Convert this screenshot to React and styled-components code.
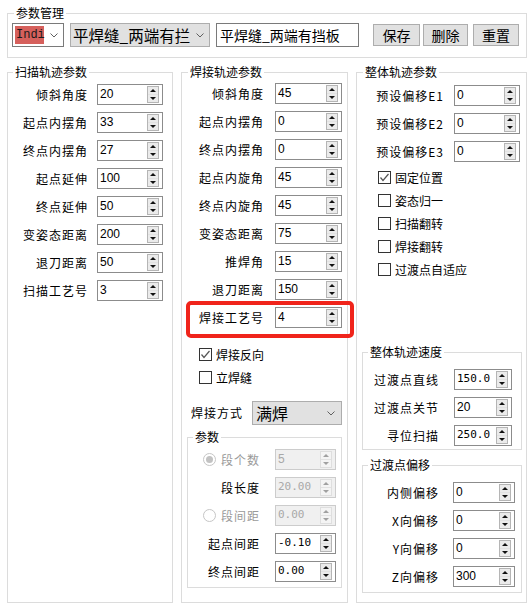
import React from "react";
import styled, { createGlobalStyle, css } from "styled-components";

const GlobalStyle = createGlobalStyle`
  html, body { margin: 0; padding: 0; background: #fff; }
  body {
    font-family: "Noto Sans CJK SC", "Noto Sans", sans-serif;
    color: #000;
  }
  * { box-sizing: border-box; }
`;

const Page = styled.div`
  width: 532px;
  height: 607px;
  padding: 13px 0 0 7px;
  display: flex;
  flex-direction: column;
  gap: 14px;
`;

const Group = styled.div`
  position: relative;
  flex-shrink: 0;
  border: 1px solid #dcdcdc;
  width: ${(p) => p.$w}px;
  height: ${(p) => p.$h}px;
  padding: ${(p) => p.$pad || "0"};
  margin: ${(p) => p.$m || "0"};
`;

const GroupTitle = styled.span`
  position: absolute;
  top: -8px;
  left: ${(p) => p.$left ?? 5}px;
  padding: 0 2px;
  background: #fff;
  font-size: 12px;
  line-height: 14px;
  white-space: nowrap;
`;

const TopRow = styled.div`
  display: flex;
  align-items: center;
  height: 24px;
`;

const Combo = styled.div`
  display: flex;
  align-items: center;
  justify-content: space-between;
  flex-shrink: 0;
  width: ${(p) => p.$w}px;
  height: 24px;
  margin-right: ${(p) => p.$mr || 0}px;
  padding: 0 ${(p) => p.$pr || 5}px 0 ${(p) => p.$pl || 2}px;
  border: 1px solid ${(p) => (p.$flat ? "#adadad" : "#7a7a7a")};
  background: ${(p) => (p.$flat ? "#e1e1e1" : "#fff")};
  font-size: ${(p) => p.$fs || 15}px;
  white-space: nowrap;
  overflow: hidden;
`;

const IndiTag = styled.span`
  width: 29px;
  height: 18px;
  background: #d6605c;
  font-family: "Liberation Mono", monospace;
  font-size: 12px;
  line-height: 18px;
  color: #1a1a1a;
  padding-left: 1px;
`;

const NameInput = styled.input`
  width: 143px;
  height: 24px;
  margin: 0 14px 0 0;
  padding: 0 3px;
  border: 1px solid #7a7a7a;
  background: #fff;
  font-family: "Noto Sans CJK SC", sans-serif;
  font-size: 14px;
  color: #000;
  outline: none;
`;

const Button = styled.button`
  width: ${(p) => p.$w}px;
  height: 22px;
  margin-right: ${(p) => p.$mr || 0}px;
  padding: 0;
  border: 1px solid #adadad;
  background: #e1e1e1;
  font-family: "Noto Sans CJK SC", sans-serif;
  font-size: 14px;
  line-height: 20px;
  color: #000;
`;

const Columns = styled.div`
  display: flex;
  gap: 8px;
`;

const FieldRow = styled.div`
  position: relative;
  display: grid;
  grid-template-columns: ${(p) => p.$lw}px ${(p) => p.$sw}px;
  column-gap: ${(p) => p.$gap}px;
  align-items: center;
  height: 21px;
  margin-bottom: 7px;
  ${(p) =>
    p.$highlight &&
    css`
      &::after {
        content: "";
        position: absolute;
        left: 4px;
        right: -7px;
        top: -6px;
        bottom: -10px;
        border: 4px solid #f0241b;
        border-radius: 5px;
      }
    `}
`;

const Label = styled.span`
  justify-self: end;
  display: flex;
  align-items: center;
  gap: 5px;
  margin-right: -1px;
  font-size: 12px;
  line-height: 14px;
  letter-spacing: 1px;
  white-space: nowrap;
  color: ${(p) => (p.$dim ? "#9a9a9a" : "#000")};
`;

const SpinBox = styled.div`
  display: flex;
  justify-content: space-between;
  height: 21px;
  padding: 1px 3px 1px 2px;
  border: 1px solid ${(p) => (p.$disabled ? "#cccccc" : "#8c8c8c")};
  background: ${(p) => (p.$disabled ? "#f0f0f0" : "#fff")};
`;

const SpinValue = styled.span`
  font-family: ${(p) =>
    p.$mono ? '"DejaVu Sans Mono", monospace' : '"Liberation Sans", Arial, sans-serif'};
  font-size: ${(p) => (p.$mono ? 11 : 12)}px;
  line-height: 16px;
  color: ${(p) => (p.$disabled ? "#a8a8a8" : "#000")};
`;

const SpinButtons = styled.div`
  display: flex;
  flex-direction: column;
  width: 12px;
  height: 17px;
  border: 1px solid ${(p) => (p.$disabled ? "#dedede" : "#b5b5b5")};
  background: ${(p) => (p.$disabled ? "#f4f4f4" : "#ebebeb")};
`;

const SpinHalf = styled.div`
  flex: 1;
  display: flex;
  align-items: center;
  justify-content: center;
  & + & {
    border-top: 1px solid ${(p) => (p.$disabled ? "#e2e2e2" : "#c4c4c4")};
  }
`;

const Arrow = styled.span`
  width: 0;
  height: 0;
  border-left: 3px solid transparent;
  border-right: 3px solid transparent;
  ${(p) =>
    p.$up
      ? css`border-bottom: 3px solid ${p.$disabled ? "#a0a0a0" : "#111"};`
      : css`border-top: 3px solid ${p.$disabled ? "#a0a0a0" : "#111"};`}
`;

const CheckList = styled.div`
  display: flex;
  flex-direction: column;
  gap: 6px;
  margin: ${(p) => p.$m || "0"};
`;

const CheckRow = styled.div`
  display: flex;
  align-items: center;
  gap: 4px;
  height: 17px;
  padding-left: ${(p) => p.$pl}px;
  font-size: 12px;
  line-height: 14px;
`;

const Box = styled.span`
  display: flex;
  align-items: center;
  justify-content: center;
  width: 13px;
  height: 13px;
  border: 1px solid #333;
  background: #fff;
`;

const Radio = styled.span`
  display: flex;
  align-items: center;
  justify-content: center;
  width: 13px;
  height: 13px;
  border: 1px solid #c6c6c6;
  border-radius: 50%;
  background: #fff;
  &::after {
    content: "";
    display: ${(p) => (p.$on ? "block" : "none")};
    width: 7px;
    height: 7px;
    border-radius: 50%;
    background: #c2c2c2;
  }
`;

const ModeRow = styled.div`
  display: flex;
  align-items: center;
  height: 24px;
  margin-top: 15px;
  padding-left: 9px;
`;

const ModeLabel = styled.span`
  width: 61px;
  font-size: 12px;
  line-height: 14px;
  letter-spacing: 1px;
`;

const Chevron = () => (
  <svg width="8" height="5" viewBox="0 0 8 5">
    <polyline points="0.5,0.5 4,4 7.5,0.5" fill="none" stroke="#606060" strokeWidth="1" />
  </svg>
);

const Tick = () => (
  <svg width="11" height="11" viewBox="0 0 11 11">
    <polyline points="1.5,5.5 4,8.5 9.5,2" fill="none" stroke="#555" strokeWidth="1.2" />
  </svg>
);

const Spinner = ({ value, mono, disabled }) => (
  <SpinBox $disabled={disabled}>
    <SpinValue $mono={mono} $disabled={disabled}>
      {value}
    </SpinValue>
    <SpinButtons $disabled={disabled}>
      <SpinHalf $disabled={disabled}>
        <Arrow $up $disabled={disabled} />
      </SpinHalf>
      <SpinHalf $disabled={disabled}>
        <Arrow $disabled={disabled} />
      </SpinHalf>
    </SpinButtons>
  </SpinBox>
);

const Field = ({ label, value, lw, sw, gap, mono, disabled, dim, radio, highlight }) => (
  <FieldRow $lw={lw} $sw={sw} $gap={gap} $highlight={highlight}>
    <Label $dim={dim}>
      {radio && <Radio $on={radio === "on"} />}
      {label}
    </Label>
    <Spinner value={value} mono={mono} disabled={disabled} />
  </FieldRow>
);

const Check = ({ label, checked, pl }) => (
  <CheckRow $pl={pl}>
    <Box>{checked && <Tick />}</Box>
    {label}
  </CheckRow>
);

const scanRows = [
  ["倾斜角度", "20"],
  ["起点内摆角", "33"],
  ["终点内摆角", "27"],
  ["起点延伸", "100"],
  ["终点延伸", "50"],
  ["变姿态距离", "200"],
  ["退刀距离", "50"],
  ["扫描工艺号", "3"],
];

const weldRows = [
  ["倾斜角度", "45"],
  ["起点内摆角", "0"],
  ["终点内摆角", "0"],
  ["起点内旋角", "45"],
  ["终点内旋角", "45"],
  ["变姿态距离", "75"],
  ["推焊角", "15"],
  ["退刀距离", "150"],
  ["焊接工艺号", "4"],
];

const segRows = [
  { label: "段个数", value: "5", disabled: true, dim: true, radio: "on" },
  { label: "段长度", value: "20.00", disabled: true, mono: true },
  { label: "段间距", value: "0.00", disabled: true, dim: true, radio: "off", mono: true },
  { label: "起点间距", value: "-0.10", mono: true },
  { label: "终点间距", value: "0.00", mono: true },
];

const offsetPresets = [
  ["预设偏移E1", "0"],
  ["预设偏移E2", "0"],
  ["预设偏移E3", "0"],
];

const globalChecks = [
  ["固定位置", true],
  ["姿态归一", false],
  ["扫描翻转", false],
  ["焊接翻转", false],
  ["过渡点自适应", false],
];

const speedRows = [
  ["过渡点直线", "150.0", true],
  ["过渡点关节", "20", false],
  ["寻位扫描", "250.0", true],
];

const shiftRows = [
  ["内侧偏移", "0"],
  ["X向偏移", "0"],
  ["Y向偏移", "0"],
  ["Z向偏移", "300"],
];

export default function App() {
  return (
    <>
      <GlobalStyle />
      <Page>
        <Group $w={520} $h={45} $pad="9px 4px 0 4px">
          <GroupTitle $left={6}>参数管理</GroupTitle>
          <TopRow>
            <Combo $w={52} $mr={6} $pl={2} $pr={5}>
              <IndiTag>Indi</IndiTag>
              <Chevron />
            </Combo>
            <Combo $w={140} $mr={6} $flat $fs={15.5} $pl={2} $pr={5}>
              <span>平焊缝_两端有拦</span>
              <Chevron />
            </Combo>
            <NameInput defaultValue="平焊缝_两端有挡板" />
            <Button $w={47} $mr={3}>保存</Button>
            <Button $w={45} $mr={5}>删除</Button>
            <Button $w={46}>重置</Button>
          </TopRow>
        </Group>

        <Columns>
          <Group $w={166} $h={531} $pad="11px 0 0 0">
            <GroupTitle>扫描轨迹参数</GroupTitle>
            {scanRows.map(([l, v]) => (
              <Field key={l} label={l} value={v} lw={79} sw={66} gap={10} />
            ))}
          </Group>

          <Group $w={167} $h={531} $pad="10px 0 0 0">
            <GroupTitle $left={6}>焊接轨迹参数</GroupTitle>
            {weldRows.map(([l, v], i) => (
              <Field
                key={l}
                label={l}
                value={v}
                lw={81}
                sw={67}
                gap={12}
                highlight={i === weldRows.length - 1}
              />
            ))}
            <CheckList $m="18px 0 0 0">
              <Check label="焊接反向" checked pl={17} />
              <Check label="立焊缝" pl={17} />
            </CheckList>
            <ModeRow>
              <ModeLabel>焊接方式</ModeLabel>
              <Combo $w={90} $flat $fs={16} $pl={3} $pr={6}>
                <span>满焊</span>
                <Chevron />
              </Combo>
            </ModeRow>
            <Group $w={155} $h={151} $m="12px 0 0 5px" $pad="11px 0 0 0">
              <GroupTitle>参数</GroupTitle>
              {segRows.map((r) => (
                <Field key={r.label} {...r} lw={71} sw={61} gap={16} />
              ))}
            </Group>
          </Group>

          <Group $w={171} $h={531} $pad="12px 0 0 0">
            <GroupTitle $left={6}>整体轨迹参数</GroupTitle>
            {offsetPresets.map(([l, v]) => (
              <Field key={l} label={l} value={v} lw={86} sw={66} gap={11} />
            ))}
            <CheckList $m="6px 0 0 0">
              {globalChecks.map(([l, c]) => (
                <Check key={l} label={l} checked={c} pl={21} />
              ))}
            </CheckList>
            <Group $w={160} $h={98} $m="74px 0 0 5px" $pad="16px 0 0 0">
              <GroupTitle>整体轨迹速度</GroupTitle>
              {speedRows.map(([l, v, m]) => (
                <Field key={l} label={l} value={v} mono={m} lw={75} sw={58} gap={16} />
              ))}
            </Group>
            <Group $w={160} $h={128} $m="15px 0 0 5px" $pad="16px 0 0 0">
              <GroupTitle>过渡点偏移</GroupTitle>
              {shiftRows.map(([l, v]) => (
                <Field key={l} label={l} value={v} lw={75} sw={62} gap={15} />
              ))}
            </Group>
          </Group>
        </Columns>
      </Page>
    </>
  );
}
